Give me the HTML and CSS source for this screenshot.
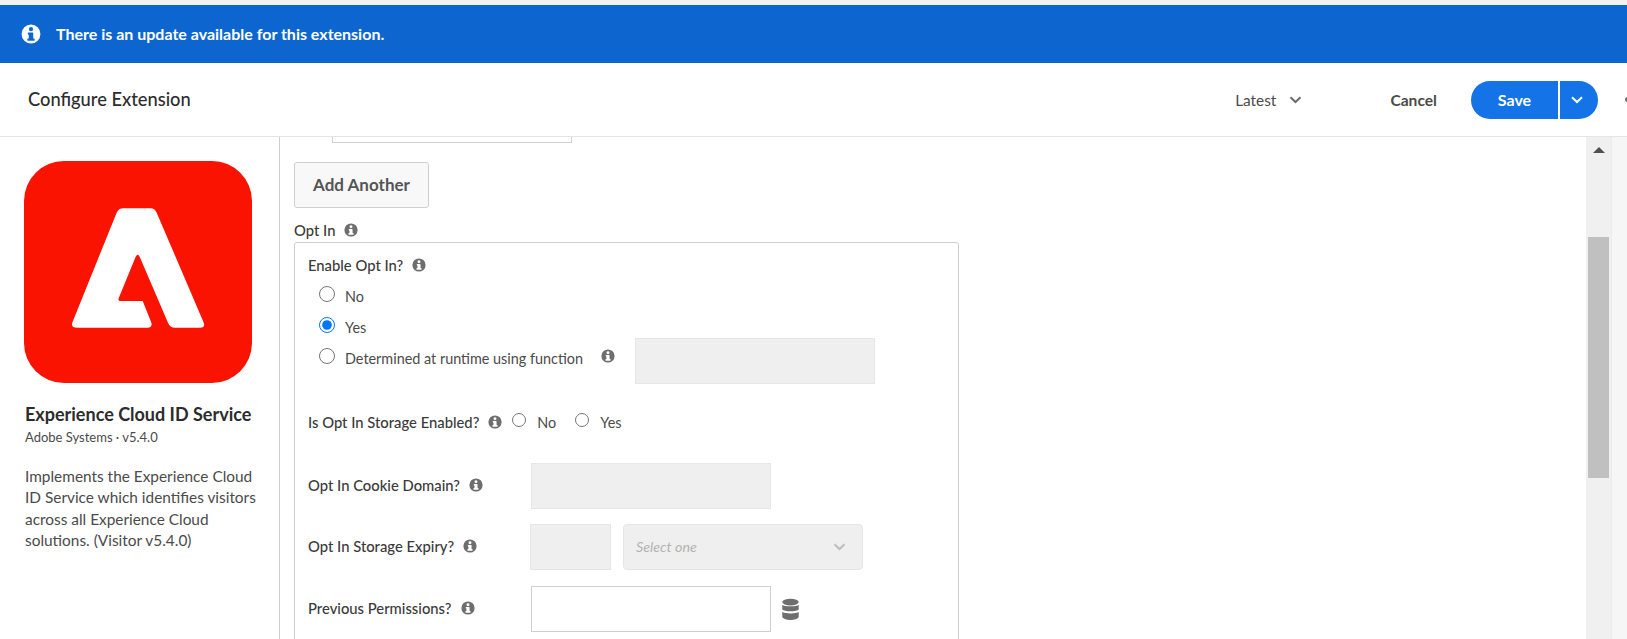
FILE: index.html
```html
<!DOCTYPE html>
<html lang="en">
<head>
<meta charset="utf-8">
<title>Configure Extension</title>
<link rel="stylesheet" href="styles.css">
</head>
<body>
<svg class="defs" width="0" height="0" aria-hidden="true">
  <symbol id="info" viewBox="0 0 18 18">
    <path fill-rule="evenodd" d="M9 .5a8.5 8.5 0 1 0 0 17 8.5 8.5 0 0 0 0-17ZM9 2.8a1.9 1.9 0 1 1 0 3.8 1.9 1.9 0 0 1 0-3.8ZM6.6 7.6h3.8a.6.6 0 0 1 .6.6V13h.8a.5.5 0 0 1 .5.5v1a.5.5 0 0 1-.5.5H6.2a.5.5 0 0 1-.5-.5v-1a.5.5 0 0 1 .5-.5H7V9.6h-.4a.5.5 0 0 1-.5-.5v-1a.5.5 0 0 1 .5-.5Z"/>
  </symbol>
</svg>
<div class="strip"></div>
<div class="banner">
  <svg class="banner-icon"><use href="#info"/></svg>
  <span>There is an update available for this extension.</span>
</div>
<header class="header">
  <h1 class="title">Configure Extension</h1>
  <div class="version">Latest
    <svg class="chev chev-version" viewBox="0 0 12 8"><path d="M1 1.2 6 6l5-4.8"/></svg>
  </div>
  <button class="cancel" type="button">Cancel</button>
  <div class="split">
    <button class="save" type="button">Save</button>
    <button class="save-more" type="button" aria-label="More save options">
      <svg class="chev chev-white" viewBox="0 0 12 8"><path d="M1 1.2 6 6l5-4.8"/></svg>
    </button>
  </div>
  <span class="more-dot"></span>
</header>
<div class="body">
  <aside class="sidebar">
    <svg class="logo" viewBox="72 63 684 666">
      <rect x="72" y="63" width="684" height="666" rx="120" fill="#fa1300"/>
      <path fill="#fff" d="M350 218Q356 205 370 205H452Q464 205 470 218L610 545Q618 563 600 563H525Q510 563 504 548L419 350Q413 338 407 350L356 475Q353 483 362 483H428L453 545Q460 563 442 563H232Q210 563 218 545Z"/>
    </svg>
    <h2 class="ext-name">Experience Cloud ID Service</h2>
    <p class="ext-meta">Adobe Systems · v5.4.0</p>
    <p class="ext-desc">Implements the Experience Cloud ID Service which identifies visitors across all Experience Cloud solutions. (Visitor v5.4.0)</p>
  </aside>
  <main class="main">
    <div class="clipped-input"></div>
    <button class="add" type="button">Add Another</button>
    <div class="label-line outer-label">Opt In <svg class="info"><use href="#info"/></svg></div>
    <section class="box">
      <div class="label-line">Enable Opt In? <svg class="info"><use href="#info"/></svg></div>
      <label class="radio-row first"><input type="radio" name="enable"><span>No</span></label>
      <label class="radio-row"><input type="radio" name="enable" checked><span>Yes</span></label>
      <div class="radio-row">
        <input type="radio" name="enable" aria-label="Determined at runtime using function">
        <span>Determined at runtime using function</span>
        <svg class="info func-info"><use href="#info"/></svg>
        <div class="field disabled func-field"></div>
      </div>
      <div class="storage">
        <span class="label-line">Is Opt In Storage Enabled? <svg class="info"><use href="#info"/></svg></span>
        <label class="inline-radio"><input type="radio" name="storage"><span>No</span></label>
        <label class="inline-radio"><input type="radio" name="storage"><span>Yes</span></label>
      </div>
      <div class="form-row cookie">
        <span class="label-line row-label">Opt In Cookie Domain? <svg class="info"><use href="#info"/></svg></span>
        <div class="field disabled"></div>
      </div>
      <div class="form-row expiry">
        <span class="label-line row-label">Opt In Storage Expiry? <svg class="info"><use href="#info"/></svg></span>
        <div class="field disabled short"></div>
        <div class="select">
          <em>Select one</em>
          <svg class="chev chev-light" viewBox="0 0 12 8"><path d="M1 1.2 6 6l5-4.8"/></svg>
        </div>
      </div>
      <div class="form-row previous">
        <span class="label-line row-label">Previous Permissions? <svg class="info"><use href="#info"/></svg></span>
        <div class="field"></div>
        <svg class="db" viewBox="0 0 17 22">
          <ellipse cx="8.5" cy="3.6" rx="8.2" ry="3.4"/>
          <path d="M.3 6.2C2 8.4 15 8.4 16.7 6.2V11C15 13.4 2 13.4.3 11Z"/>
          <path d="M.3 13.2C2 15.5 15 15.5 16.7 13.2V18.6C15 22.6 2 22.6.3 18.6Z"/>
        </svg>
      </div>
    </section>
  </main>
  <div class="scrollbar">
    <span class="arrow"></span>
    <div class="thumb"></div>
  </div>
  <div class="gutter"></div>
</div>
</body>
</html>
```
FILE: styles.css
```css
* { box-sizing: border-box; }
html, body { height: 100%; }
body {
  margin: 0;
  height: 639px;
  overflow: hidden;
  display: flex;
  flex-direction: column;
  background: #fff;
  color: #4b4b4b;
  font-family: "Lato", "Open Sans", sans-serif;
  font-size: 14px;
}
button { font-family: inherit; cursor: pointer; }
.defs { position: absolute; }
.strip { height: 5px; background: #f3f3f3; flex: none; }
.banner {
  height: 58px;
  flex: none;
  background: #0d66d0;
  color: #fff;
  display: flex;
  align-items: center;
  padding: 0 0 1px 21px;
  font-size: 16px;
  font-weight: 700;
}
.banner-icon { width: 20px; height: 20px; margin-right: 15px; fill: #fff; }
.header {
  height: 74px;
  flex: none;
  display: flex;
  align-items: center;
  padding-left: 28px;
  border-bottom: 1px solid #e4e4e4;
  overflow: hidden;
}
.title { margin: 0 0 1px; font-size: 18.3px; font-weight: 500; color: #2c2c2c; flex: 1; }
.version { display: flex; align-items: center; gap: 13px; font-size: 15.4px; color: #4b4b4b; margin-right: 88px; }
.chev { width: 12px; height: 8px; fill: none; stroke: #6e6e6e; stroke-width: 2; }
.chev-version { width: 13px; }
.chev-white { stroke: #fff; }
.chev-light { stroke: #bdbdbd; width: 13px; }
.cancel { border: 0; background: none; padding: 0; font-size: 15.6px; font-weight: 700; color: #4b4b4b; margin-right: 34px; }
.split { display: flex; gap: 2px; height: 38px; }
.save, .save-more { border: 0; background: #1473e6; color: #fff; font-size: 16px; font-weight: 700; padding: 0; }
.save { width: 87px; border-radius: 19px 0 0 19px; }
.save-more { width: 38px; border-radius: 0 19px 19px 0; display: flex; align-items: center; justify-content: center; padding-right: 4px; }
.more-dot { width: 5px; height: 5px; border-radius: 50%; background: #6e6e6e; margin: 0 -3px 0 27px; flex: none; }
.body { flex: 1; display: flex; min-height: 0; }
.sidebar { width: 280px; flex: none; padding: 24px 0 0 24px; border-right: 1px solid #cfcfcf; }
.logo { display: block; width: 228px; height: 222px; }
.ext-name { margin: 20px 0 0 1px; font-size: 18px; line-height: 22px; font-weight: 700; color: #2c2c2c; white-space: nowrap; }
.ext-meta { margin: 4px 0 0 1px; font-size: 13px; line-height: 16px; color: #4b4b4b; }
.ext-desc { margin: 21px 0 0 1px; width: 238px; font-size: 15.4px; line-height: 21.3px; color: #4b4b4b; }
.main { flex: 1; min-width: 0; padding-left: 14px; overflow: hidden; }
.clipped-input { width: 240px; height: 6px; margin-left: 38px; border: 1px solid #cfcfcf; border-top: 0; }
.add {
  display: block;
  width: 135px;
  height: 46px;
  margin-top: 19px;
  background: #f8f8f8;
  border: 1px solid #cfcfcf;
  border-radius: 3px;
  font-size: 17px;
  font-weight: 700;
  color: #555;
  padding: 0 0 2px;
}
.label-line { display: inline-flex; align-items: center; gap: 9px; font-size: 14.8px; font-weight: 500; color: #3a3a3a; white-space: nowrap; }
.outer-label { display: flex; height: 20px; margin-top: 12px; }
.info { width: 14px; height: 14px; fill: #6e6e6e; flex: none; }
.box { width: 665px; height: 500px; margin-top: 2px; border: 1px solid #cfcfcf; border-radius: 3px; padding: 12px 0 0 13px; }
.box > .label-line { display: flex; height: 20px; }
.radio-row { display: flex; align-items: center; height: 31px; padding-left: 11px; font-size: 14.4px; color: #4b4b4b; }
.radio-row span { position: relative; top: 3px; }
.radio-row.first { margin-top: 3px; }
input[type="radio"] { width: 16px; height: 16px; margin: 0 10px 0 0; flex: none; }
.func-info { margin-left: 18px; }
.field { width: 240px; height: 46px; border: 1px solid #cfcfcf; background: #fff; flex: none; }
.field.disabled { background: #efefef; border-color: #e6e6e6; }
.func-field { margin-left: 20px; margin-top: -2px; align-self: flex-start; }
.storage { display: flex; align-items: center; height: 26px; margin-top: 38px; }
.storage .label-line { margin-right: 10px; }
.inline-radio { display: inline-flex; align-items: center; font-size: 14.4px; margin-right: 19px; }
.inline-radio input { width: 14px; height: 14px; margin: -5px 11px 0 0; }
.form-row { display: flex; align-items: center; }
.row-label { width: 223px; margin-bottom: 3px; }
.cookie { margin-top: 28px; height: 46px; }
.expiry { margin-top: 15px; height: 46px; }
.expiry .short { width: 81px; margin-left: -1px; margin-right: 12px; }
.select {
  width: 240px;
  height: 46px;
  display: flex;
  align-items: center;
  justify-content: space-between;
  padding: 0 16px 0 12px;
  background: #efefef;
  border: 1px solid #e6e6e6;
  border-radius: 4px;
}
.select em { font-size: 14.3px; color: #b3b3b3; margin-bottom: 2px; }
.previous { margin-top: 16px; height: 46px; }
.db { width: 17px; height: 23px; margin-left: 11px; fill: #6e6e6e; }
.scrollbar { width: 25px; flex: none; background: #f0f0f0; padding-left: 2px; }
.arrow {
  display: block;
  width: 0;
  margin: 10px 0 0 5px;
  border-left: 6px solid transparent;
  border-right: 6px solid transparent;
  border-bottom: 6px solid #505050;
}
.thumb { width: 21px; height: 241px; margin-top: 84px; background: #c0c0c0; }
.gutter { width: 16px; flex: none; background: #f6f6f6; border-left: 1px solid #ececec; }
```
